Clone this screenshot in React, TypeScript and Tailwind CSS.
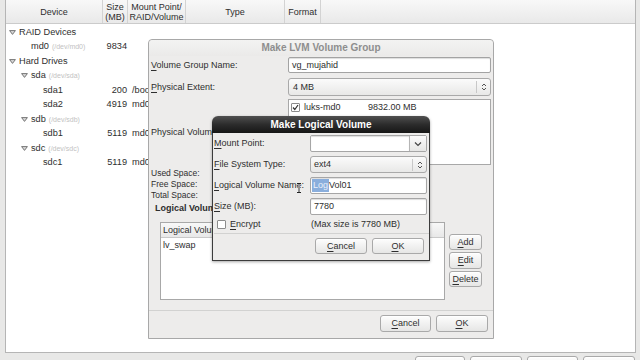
import React from "react";

const FONT = "font-['Liberation_Sans','DejaVu_Sans',sans-serif]";

function Mn({ children }: { children: React.ReactNode }) {
  return <span className="underline decoration-1 underline-offset-[1.5px]">{children}</span>;
}

function Btn({ children, className = "" }: { children: React.ReactNode; className?: string }) {
  return (
    <div
      className={`flex shrink-0 items-center justify-center rounded-[3px] border border-[#a9a9a9] bg-linear-to-b from-[#fdfdfd] to-[#e6e6e5] text-[9px] text-[#2e2e2e] shadow-[inset_0_1px_0_#fff] ${className}`}
    >
      {children}
    </div>
  );
}

function UpDown() {
  return (
    <svg width="6" height="10" viewBox="0 0 6 10">
      <path d="M1 4 L3 2 L5 4 M1 6 L3 8 L5 6" fill="none" stroke="#555" strokeWidth="1" />
    </svg>
  );
}

function ChevronDown() {
  return (
    <svg width="8" height="6" viewBox="0 0 8 6">
      <path d="M1 1.5 L4 4.5 L7 1.5" fill="none" stroke="#444" strokeWidth="1.2" />
    </svg>
  );
}

function Expander() {
  return (
    <svg width="7" height="5" viewBox="0 0 7 5">
      <path d="M0.6 0.6 H6.4 L3.5 4.4 Z" fill="#d8d8d8" stroke="#6a6a6a" strokeWidth="0.9" strokeLinejoin="round" />
    </svg>
  );
}

function Check({ checked }: { checked?: boolean }) {
  return (
    <div className="flex h-[9px] w-[9px] shrink-0 items-center justify-center rounded-[1px] border border-[#8c8c8c] bg-white">
      {checked && (
        <svg width="7" height="7" viewBox="0 0 7 7">
          <path d="M1 3.5 L2.8 5.5 L6 1" fill="none" stroke="#333" strokeWidth="1.2" />
        </svg>
      )}
    </div>
  );
}

type Row = { level: number; exp?: boolean; name: string; sub?: string; size?: string; mount?: string };

const rows: Row[] = [
  { level: 0, exp: true, name: "RAID Devices" },
  { level: 1, name: "md0", sub: "(/dev/md0)", size: "9834" },
  { level: 0, exp: true, name: "Hard Drives" },
  { level: 1, exp: true, name: "sda", sub: "(/dev/sda)" },
  { level: 2, name: "sda1", size: "200", mount: "/boot" },
  { level: 2, name: "sda2", size: "4919", mount: "md0" },
  { level: 1, exp: true, name: "sdb", sub: "(/dev/sdb)" },
  { level: 2, name: "sdb1", size: "5119", mount: "md0" },
  { level: 1, exp: true, name: "sdc", sub: "(/dev/sdc)" },
  { level: 2, name: "sdc1", size: "5119", mount: "md0" },
];

const indent = ["pl-[2px]", "pl-[14px]", "pl-[26px]"];

function HeaderCell({ children, className = "" }: { children: React.ReactNode; className?: string }) {
  return (
    <div className={`flex h-full flex-col items-center justify-center border-r border-[#d3d3d3] text-center leading-[10px] ${className}`}>
      {children}
    </div>
  );
}

export default function App() {
  return (
    <div className={`relative h-[360px] w-[640px] overflow-hidden bg-[#e8e8e7] ${FONT} text-[9px] leading-none text-[#2e2e2e]`}>
      <div className="flex h-full flex-col">
        {/* tree view panel */}
        <div className="ml-[5px] mr-[4px] flex h-[353px] shrink-0 flex-col border-x border-b border-[#b5b5b5] bg-white">
          <div className="grid h-[24px] shrink-0 grid-cols-[97px_25px_58px_99px_36px_1fr] border-b border-[#cbcbcb] bg-linear-to-b from-[#f8f8f8] to-[#e9e9e9]">
            <HeaderCell>Device</HeaderCell>
            <HeaderCell>
              <span>Size</span>
              <span>(MB)</span>
            </HeaderCell>
            <HeaderCell>
              <span>Mount Point/</span>
              <span>RAID/Volume</span>
            </HeaderCell>
            <HeaderCell>Type</HeaderCell>
            <HeaderCell>Format</HeaderCell>
            <div />
          </div>
          <div className="flex flex-col pt-[1px]">
            {rows.map((r, i) => (
              <div key={i} className="grid h-[14.5px] grid-cols-[97px_25px_58px_1fr] items-center">
                <div className={`flex items-center ${indent[r.level]}`}>
                  <div className="flex w-[11px] items-center pl-[1px]">{r.exp && <Expander />}</div>
                  <span className="text-[9.2px]">{r.name}</span>
                  {r.sub && <span className="ml-[3px] text-[7px] text-[#c2c2c2]">{r.sub}</span>}
                </div>
                <div className="pr-[1px] text-right text-[9.2px]">{r.size}</div>
                <div className="pl-[4px] text-[9.2px]">{r.mount}</div>
                <div />
              </div>
            ))}
          </div>
        </div>
        {/* bottom buttons */}
        <div className="mt-[3px] flex shrink-0 justify-end gap-[5px] pr-[5px]">
          <Btn className="h-[20px] w-[50px]"> </Btn>
          <Btn className="h-[20px] w-[52px]"> </Btn>
          <Btn className="h-[20px] w-[51px]"> </Btn>
          <Btn className="h-[20px] w-[52px]"> </Btn>
        </div>
      </div>

      {/* Make LVM Volume Group dialog */}
      <div className="absolute left-[148px] top-[39px] flex h-[300px] w-[346px] flex-col rounded-t-[4px] border border-[#a8a8a8] bg-[#edeceb]">
        <div className="flex h-[16px] items-center justify-center rounded-t-[4px] bg-linear-to-b from-[#f3f3f2] to-[#ebeae9] text-[10px] font-bold text-[#8e8e8e]">
          Make LVM Volume Group
        </div>
        <div className="mt-[1px] grid grid-cols-[137px_203px] px-[2px]">
          <div className="flex h-[16px] items-center">
            <span><Mn>V</Mn>olume Group Name:</span>
          </div>
          <div className="flex h-[16px] items-center rounded-[2px] border border-[#a3a3a3] bg-white pl-[3px] shadow-[inset_0_1px_1px_#ddd]">
            vg_mujahid
          </div>

          <div className="mt-[5px] flex h-[18px] items-center">
            <span><Mn>P</Mn>hysical Extent:</span>
          </div>
          <div className="mt-[5px] flex h-[18px] items-center rounded-[3px] border border-[#a9a9a9] bg-linear-to-b from-[#fbfbfb] to-[#e8e8e7]">
            <span className="flex-1 pl-[4px]">4 MB</span>
            <div className="flex h-[12px] w-[14px] items-center justify-center border-l border-[#c8c8c8]">
              <UpDown />
            </div>
          </div>

          <div className="mt-[3px] flex h-[66px] items-center">
            <span>Physical Volumes to Use:</span>
          </div>
          <div className="mt-[3px] h-[66px] border border-[#a8a8a8] bg-white">
            <div className="flex h-[15px] items-center pl-[2px]">
              <Check checked />
              <span className="ml-[4px] w-[64px]">luks-md0</span>
              <span>9832.00 MB</span>
            </div>
          </div>
        </div>
        <div className="mt-[3px] flex flex-col px-[2px] text-[8.5px] leading-[11px]">
          <span>Used Space:</span>
          <span>Free Space:</span>
          <span>Total Space:</span>
        </div>
        <div className="mt-[2px] h-[11px] pl-[6px] text-[9px] font-bold leading-[11px]">Logical Volumes</div>
        <div className="mt-[8px] flex pl-[11px]">
          <div className="flex h-[78px] w-[285px] flex-col border border-[#a8a8a8] bg-white">
            <div className="flex h-[15px] items-center border-b border-[#c9c9c9] bg-linear-to-b from-[#f8f8f8] to-[#e8e8e8]">
              <span className="w-[110px] border-r border-[#d3d3d3] pl-[2px]">Logical Volume Name</span>
              <span className="w-[80px] pl-[10px]">Mount Point</span>
            </div>
            <div className="flex h-[14px] items-center pl-[2px]">lv_swap</div>
          </div>
          <div className="ml-[4px] mt-[12px] flex w-[33px] flex-col gap-[2px]">
            <Btn className="h-[16px]"><span><Mn>A</Mn>dd</span></Btn>
            <Btn className="h-[17px]"><span><Mn>E</Mn>dit</span></Btn>
            <Btn className="h-[16px]"><span><Mn>D</Mn>elete</span></Btn>
          </div>
        </div>
        <div className="mt-auto border-t border-[#d2d2d1] shadow-[inset_0_1px_0_#fbfbfb]" />
        <div className="flex justify-end gap-[5px] pb-[6px] pr-[5px] pt-[4px]">
          <Btn className="h-[17px] w-[51px]"><span><Mn>C</Mn>ancel</span></Btn>
          <Btn className="h-[17px] w-[52px]"><span><Mn>O</Mn>K</span></Btn>
        </div>
      </div>

      {/* Make Logical Volume dialog */}
      <div className="absolute left-[212px] top-[116px] flex h-[145px] w-[218px] flex-col rounded-t-[6px] shadow-[0_1px_3px_rgba(0,0,0,0.35)]">
        <div className="flex h-[17px] items-center justify-center rounded-t-[6px] bg-linear-to-b from-[#505050] via-[#2c2c2c] to-[#161616] text-[10px] font-bold text-white">
          Make Logical Volume
        </div>
        <div className="relative flex flex-1 flex-col border-x border-b border-[#3c3c3c] bg-[#edeceb] pl-[1px]">
          <div className="mt-[2px] grid grid-cols-[96px_117px] gap-y-[4px]">
            <div className="flex h-[17px] items-center"><span><Mn>M</Mn>ount Point:</span></div>
            <div className="flex h-[17px] rounded-[2px] border border-[#a6a6a6] bg-white">
              <div className="flex-1 shadow-[inset_0_1px_1px_#ddd]" />
              <div className="flex w-[17px] items-center justify-center border-l border-[#b5b5b5] bg-linear-to-b from-[#fbfbfb] to-[#e6e6e5]">
                <ChevronDown />
              </div>
            </div>

            <div className="flex h-[17px] items-center"><span><Mn>F</Mn>ile System Type:</span></div>
            <div className="flex h-[17px] items-center rounded-[3px] border border-[#a9a9a9] bg-linear-to-b from-[#fbfbfb] to-[#e8e8e7]">
              <span className="flex-1 pl-[3px]">ext4</span>
              <div className="flex h-[12px] w-[14px] items-center justify-center border-l border-[#c8c8c8]">
                <UpDown />
              </div>
            </div>

            <div className="flex h-[17px] items-center"><span><Mn>L</Mn>ogical Volume Name:</span></div>
            <div className="flex h-[17px] items-center rounded-[2px] border border-[#a6a6a6] bg-white pl-[1px] shadow-[inset_0_1px_1px_#ddd]">
              <span className="flex h-[13px] items-center bg-[#8aaedc] px-[1px] text-[#e9f0fa]">Log</span>
              <span>Vol01</span>
            </div>

            <div className="flex h-[17px] items-center"><span><Mn>S</Mn>ize (MB):</span></div>
            <div className="flex h-[17px] items-center rounded-[2px] border border-[#a6a6a6] bg-white pl-[3px] shadow-[inset_0_1px_1px_#ddd]">
              7780
            </div>

            <div className="mt-[-2px] flex h-[14px] items-center pl-[3px]">
              <Check />
              <span className="ml-[4px]"><Mn>E</Mn>ncrypt</span>
            </div>
            <div className="mt-[-2px] flex h-[14px] items-center pl-[1px]">(Max size is 7780 MB)</div>
          </div>
          <div className="mt-[2px] border-t border-[#d2d2d1] shadow-[inset_0_1px_0_#fbfbfb]" />
          <div className="mt-[4px] flex justify-end gap-[5px] pr-[5px]">
            <Btn className="h-[16px] w-[52px]"><span><Mn>C</Mn>ancel</span></Btn>
            <Btn className="h-[16px] w-[52px]"><span><Mn>O</Mn>K</span></Btn>
          </div>
          {/* I-beam mouse cursor */}
          <svg className="absolute left-[83px] top-[50px]" width="6" height="10" viewBox="0 0 6 10">
            <path d="M1 0.5 H5 M3 0.5 V9.5 M1 9.5 H5" fill="none" stroke="#fff" strokeWidth="2" />
            <path d="M1 0.5 H5 M3 0.5 V9.5 M1 9.5 H5" fill="none" stroke="#222" strokeWidth="1" />
          </svg>
        </div>
      </div>
    </div>
  );
}
